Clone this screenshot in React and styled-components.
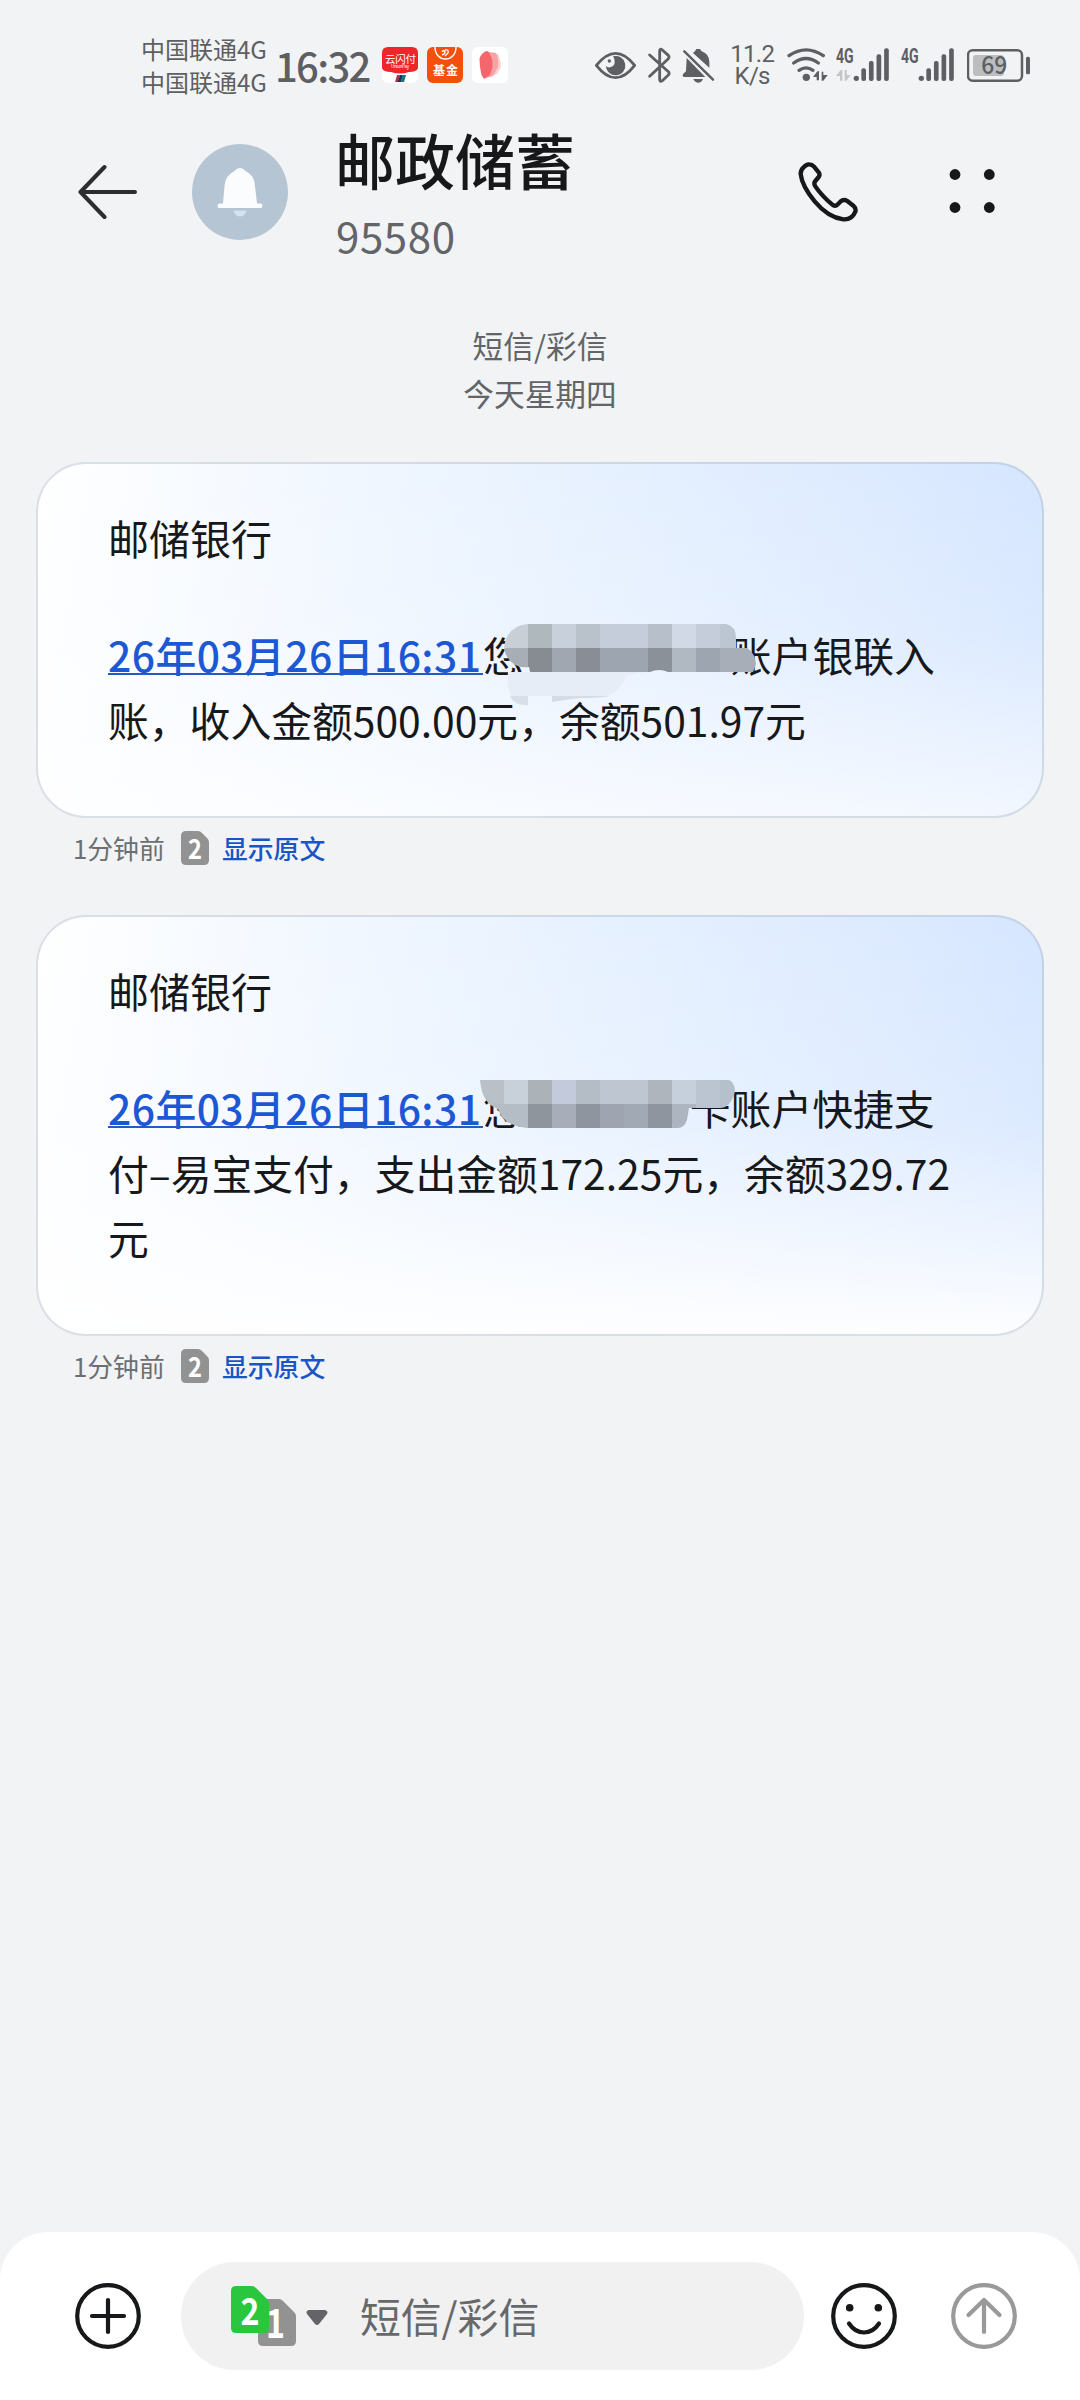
import React from "react";
import styled, { createGlobalStyle } from "styled-components";

const FONT = '"Noto Sans CJK SC", "Noto Sans", sans-serif';

const GlobalStyle = createGlobalStyle`
  * { box-sizing: border-box; }
  body { margin: 0; background: #f1f3f5; font-family: ${FONT}; }
  svg { display: block; flex: none; }
`;

const Screen = styled.div`
  width: 1080px;
  height: 2400px;
  display: flex;
  flex-direction: column;
  background: #f1f3f5;
  color: #17181a;
  overflow: hidden;
`;

const StatusBar = styled.div`
  height: 130px;
  flex: none;
  display: flex;
  align-items: center;
  justify-content: space-between;
  padding: 0 50px 0 141px;
  color: #5d5f62;
`;

const StatusGroup = styled.div`
  display: flex;
  align-items: center;
`;

const Carriers = styled.div`
  width: 126px;
  font-size: 24px;
  line-height: 33px;
  white-space: nowrap;
`;

const Clock = styled.div`
  width: 96px;
  flex: none;
  margin: 0 11px 0 8px;
  font-size: 40px;
  line-height: 50px;
  font-weight: 500;
  letter-spacing: -1.7px;
  white-space: nowrap;
`;

const AppIcons = styled.div`
  display: flex;
  gap: 9px;
`;

const Speed = styled.div`
  width: 45px;
  flex: none;
  margin: 0 12px 0 14px;
  display: flex;
  flex-direction: column;
  align-items: center;
  font-family: Roboto, sans-serif;
  font-size: 24px;
  line-height: 22px;
  letter-spacing: -0.7px;
  white-space: nowrap;
`;

const Spacer = styled.div`
  width: ${(p) => p.$w}px;
  flex: none;
`;

const Header = styled.header`
  height: 142px;
  flex: none;
  display: flex;
  align-items: center;
  padding: 0 85px 0 78px;
  margin-top: -9px;
`;

const Avatar = styled.div`
  width: 96px;
  height: 96px;
  margin: 0 47px 0 54px;
  border-radius: 50%;
  background: #b6c5d3;
`;

const Contact = styled.div`
  flex: 1;
  display: flex;
  flex-direction: column;
  gap: 12px;
`;

const Name = styled.h1`
  margin: 0;
  font-size: 60px;
  line-height: 73px;
  font-weight: 500;
`;

const Number = styled.div`
  padding-left: 1px;
  font-size: 42px;
  line-height: 56px;
  letter-spacing: 0.6px;
  color: #626467;
`;

const Actions = styled.div`
  display: flex;
  align-items: center;
  gap: 91px;
`;

const Thread = styled.main`
  flex: 1;
  padding: 58px 36px 0;
`;

const DayLabel = styled.div`
  height: 141px;
  text-align: center;
  font-size: 30.7px;
  line-height: 48px;
  color: #626467;
`;

const Card = styled.article`
  position: relative;
  padding: 41px 0 64px 70px;
  border: 2px solid rgba(170, 180, 195, 0.42);
  border-radius: 50px;
  background:
    linear-gradient(to bottom, rgba(255, 255, 255, 0) 0%, rgba(255, 255, 255, 0.2) 50%, rgba(255, 255, 255, ${(p) => p.$fade}) 100%),
    linear-gradient(100deg, #ffffff 0%, #f6faff 18%, #e8f2ff 48%, #dceaff 80%, #d2e4ff 100%);
  background-origin: border-box;
`;

const Title = styled.div`
  font-size: 41px;
  line-height: 65px;
  margin-bottom: 52px;
`;

const Line = styled.div`
  height: 65px;
  display: flex;
  font-size: 40.8px;
  line-height: 65px;
  white-space: pre;
`;

const DateLink = styled.a`
  width: 375px;
  height: 53px;
  border-bottom: 2px solid #1f5cc4;
  color: #1c58d4;
  font-weight: 500;
  letter-spacing: 0.45px;
`;

const Hidden = styled.span`
  width: ${(p) => p.$w}px;
`;

const Mosaic = styled.svg`
  position: absolute;
  left: 442px;
  top: ${(p) => p.$top}px;
`;

const Meta = styled.div`
  height: 97px;
  padding: 11px 0 0 37px;
  display: flex;
  align-items: flex-start;
  font-size: 25.8px;
  line-height: 38px;
  color: #6c6e71;
`;

const MetaTime = styled.span`
  width: 108px;
  white-space: nowrap;
`;

const MetaLink = styled.a`
  margin-left: 13px;
  color: #1a55c8;
  font-weight: 500;
`;

const Badge = styled.span`
  padding-top: 2px;
`;

const Composer = styled.footer`
  height: 168px;
  flex: none;
  display: flex;
  align-items: center;
  padding-left: 75px;
  background: #fff;
  border-radius: 48px 48px 0 0;
`;

const Field = styled.div`
  width: 623px;
  height: 108px;
  margin: 0 27px 0 40px;
  padding-left: 49px;
  display: flex;
  align-items: center;
  border-radius: 54px;
  background: #f1f1f1;
`;

const Placeholder = styled.span`
  margin-left: 32px;
  font-size: 40.8px;
  line-height: 60px;
  color: #66686a;
`;

/* Status glyphs share one drawing grid, three units to a pixel. */
const Glyph = ({ x, w, children }) => (
  <svg width={w / 3} height="40" viewBox={`${x} 75 ${w} 120`} fill="#5d5f62">
    {children}
  </svg>
);

const Signal = ({ x, data }) => (
  <Glyph x={x} w={162}>
    <text x={x} y="128" fontFamily="Roboto, sans-serif" fontWeight="700" fontSize="58" textLength="53" lengthAdjust="spacingAndGlyphs">4G</text>
    {data && (
      <g fill="#c3c5c7">
        <path d={`M${x} 168L${x + 14} 150H${x + 19}V182H${x + 12}V168Z`} />
        <path d={`M${x + 26} 150H${x + 32}V165H${x + 44}L${x + 31} 182H${x + 26}Z`} />
      </g>
    )}
    <circle cx={x + 61} cy="175" r="8" />
    {[145, 123, 103, 85].map((y, i) => (
      <rect key={y} x={x + 76 + i * 22.8} y={y} width="14" height={183 - y} rx="6" />
    ))}
  </Glyph>
);

const CloudPayIcon = () => (
  <svg width="36" height="36" viewBox="0 0 36 36">
    <rect width="36" height="36" rx="6" fill="#fff" />
    <path d="M0 6Q0 0 6 0H30Q36 0 36 6V21Q35 25 27 25Q18 28 9 25Q1 25 0 21Z" fill="#ee2529" />
    <text x="3" y="15.5" fontSize="10.5" fill="#fff" textLength="31" fontFamily={FONT}>云闪付</text>
    <text x="9" y="21" fontSize="4.5" fill="#fff" textLength="18" fontFamily={FONT}>UnionPay</text>
    <path d="M15 28H18L16 35H13Z" fill="#b8324a" />
    <path d="M18 28H21L19 35H15.5Z" fill="#17335c" />
    <path d="M20.500 28H24L22 35H19Z" fill="#16727c" />
  </svg>
);

const FundIcon = () => (
  <svg width="36" height="36" viewBox="0 0 36 36">
    <rect width="36" height="36" rx="6" fill="#f4500b" />
    <path d="M8 0C8 16 29 16 29 0" fill="none" stroke="#fff" strokeWidth="1.4" />
    <path d="M15 5Q17 2 18 5Q18 7 15 8M18 3Q22 2 21 6L18 9" fill="none" stroke="#fff" strokeWidth="1.3" />
    <text x="6" y="28" fontSize="12" fontWeight="700" fill="#fff" textLength="25" fontFamily={FONT}>基金</text>
  </svg>
);

const PetalIcon = () => (
  <svg width="36" height="36" viewBox="0 0 36 36">
    <rect width="36" height="36" rx="6" fill="#fff" />
    <path d="M20 6L26 7Q29 13 29 20L25 27L17 30Z" fill="#fbd0d2" />
    <path d="M17 5L24 6Q27 12 26 20L21 29L14 31Z" fill="#f7a3a6" />
    <path d="M7.500 12Q8 8 13 4.500L16 4Q21 10 20.500 20L18 28L12 32L9.500 28Q7.500 20 7.500 12Z" fill="#f2666c" />
  </svg>
);

const StatusIcons = () => (
  <StatusGroup>
    <Glyph x={45} w={123}>
      <path d="M49 136Q107 64 164 136Q107 210 49 136Z" fill="none" stroke="#5d5f62" strokeWidth="8.5" strokeLinejoin="round" />
      <path d="M99 109A29 29 0 1 1 78 138Q82 143 90 142Q105 139 104 124Q104 116 99 109Z" />
      <circle cx="88" cy="123" r="5" />
    </Glyph>
    <Spacer $w={12} />
    <Glyph x={203} w={69}>
      <path d="M208 105L265 156Q268 161 264 165L246 182Q238 188 238 178V94Q238 83 246 90L264 106Q268 111 264 116L208 169" fill="none" stroke="#5d5f62" strokeWidth="8.5" strokeLinecap="round" strokeLinejoin="round" />
    </Glyph>
    <Spacer $w={11} />
    <Glyph x={307} w={100}>
      <path d="M314 94L400 179" stroke="#5d5f62" strokeWidth="7.5" strokeLinecap="round" />
      <path d="M321 114L377 171H312Q307 168 310 162L319 154Z" />
      <path d="M340 99Q347 94 350 87H361L365 93Q388 101 389 125V143Z" />
      <path d="M341 177H370Q366 188 355 188Q345 187 341 177Z" />
    </Glyph>
    <Speed>
      <span>11.2</span>
      <span>K/s</span>
    </Speed>
    <Glyph x={622} w={123}>
      <g fill="none" stroke="#5d5f62" strokeWidth="10" strokeLinecap="round">
        <path d="M628 107Q679 72 731 107" />
        <path d="M642 129Q679 102 716 129" />
        <path d="M658 151Q679 136 700 151" />
      </g>
      <circle cx="680" cy="172" r="11" />
      <path d="M700 171L713 154H718V181H711V171Z" />
      <path d="M726 155H731V165H744L731 182H726Z" />
    </Glyph>
    <Spacer $w={8} />
    <Signal x={768} data />
    <Spacer $w={11} />
    <Signal x={963} />
    <Spacer $w={12} />
    <Glyph x={1161} w={190}>
      <rect x="1164" y="91" width="162" height="91" rx="14" fill="none" stroke="#5d5f62" strokeWidth="7.5" />
      <path d="M1188 105H1262Q1272 105 1272 115V158Q1272 168 1262 168H1188Q1179 168 1179 158V115Q1179 105 1188 105Z" fill="#bcbdbf" />
      <rect x="1338" y="110" width="12" height="53" rx="5" />
      <text x="1204" y="163" fontFamily={FONT} fontSize="73" fontWeight="500" textLength="78" lengthAdjust="spacingAndGlyphs">69</text>
    </Glyph>
  </StatusGroup>
);

const SimShape = ({ x = 0, y = 0, w, h, cut, fill }) => (
  <path
    d={`M${x + 5} ${y}H${x + w - cut - 2}Q${x + w - cut} ${y} ${x + w - cut + 2} ${y + 2}L${x + w - 2} ${y + cut - 2}Q${x + w} ${y + cut} ${x + w} ${y + cut + 2}V${y + h - 5}Q${x + w} ${y + h} ${x + w - 5} ${y + h}H${x + 5}Q${x} ${y + h} ${x} ${y + h - 5}V${y + 5}Q${x} ${y} ${x + 5} ${y}Z`}
    fill={fill}
  />
);

const SimBadge = () => (
  <Badge>
    <svg width="28" height="34" viewBox="0 0 28 34" overflow="visible">
      <SimShape w={28} h={34} cut={9} fill="#929292" />
      <text x="7" y="27.5" fontFamily={FONT} fontSize="27" fontWeight="700" fill="#fff" textLength="14" lengthAdjust="spacingAndGlyphs">2</text>
    </svg>
  </Badge>
);

const CELL_EDGES = [480, 504, 528, 552, 576, 600, 624, 648, 672, 696, 720, 744];

const MosaicRow = ({ y, colors, clip }) => (
  <g clipPath={`url(#${clip})`}>
    {colors.map((c, i) => (
      <rect key={i} x={CELL_EDGES[i]} y={y} width="24" height="24" fill={c} shapeRendering="crispEdges" />
    ))}
  </g>
);

const IncomeMosaic = () => (
  <Mosaic $top={160} width="288" height="84" viewBox="480 624 288 84">
    <clipPath id="income">
      <path d="M528 624H726Q736 626 736 638V648H747Q755 653 756 664L753 672H668Q659 668 650 672H530L529 667Q515 669 508 658Q501 648 507 637Q513 625 528 624Z" />
    </clipPath>
    <path d="M508 672H646L627 675Q622 690 608 696H511Q506 686 508 672Z" fill="#e6edf7" />
    <path d="M510 696H528V705Q514 706 510 696Z" fill="#d9dfe8" />
    <path d="M552 696H609Q602 698 580 698L552 702Z" fill="#d6dbe4" />
    <MosaicRow y={624} clip="income" colors={["#c9cfd6", "#c9cfd7", "#afb8bd", "#c8d0dc", "#b9c1cb", "#c5ccda", "#c5ccda", "#b7c0ca", "#d0d9e5", "#c4cdd9", "#bcc5d2", "#bcc5d2"]} />
    <MosaicRow y={648} clip="income" colors={["#a8aeb5", "#a8aeb5", "#878c92", "#a1a7b0", "#898e96", "#9da5b0", "#9da5b0", "#8a9199", "#b0b8c2", "#9da5b0", "#a7aeb8", "#a7aeb8"]} />
  </Mosaic>
);

const PaymentMosaic = () => (
  <Mosaic $top={163} width="288" height="60" viewBox="480 1080 288 60">
    <clipPath id="payment">
      <path d="M480 1080H729Q735 1083 735 1091Q731 1108 720 1108H689L687 1120Q684 1128 678 1128H528Q503 1126 498 1109Q482 1104 480 1080Z" />
    </clipPath>
    <MosaicRow y={1080} clip="payment" colors={["#b9c0c8", "#c8d0da", "#abb3b8", "#c2cadb", "#b4bcc6", "#bec6d2", "#bec6d2", "#aeb5bd", "#c5d0dc", "#bac5d1", "#b4c0cc"]} />
    <MosaicRow y={1104} clip="payment" colors={["#b4bcc6", "#b4bcc6", "#8e959c", "#a7aeba", "#8f959f", "#9ea5b1", "#a1a9b4", "#8f959f", "#adb5c0", "#bac5d1", "#b4c0cc"]} />
  </Mosaic>
);

const MessageMeta = () => (
  <Meta>
    <MetaTime>1分钟前</MetaTime>
    <SimBadge />
    <MetaLink>显示原文</MetaLink>
  </Meta>
);

const RoundIcon = ({ color = "#17181a", children }) => (
  <svg width="66" height="66" viewBox="0 0 66 66" fill="none" stroke={color} strokeWidth="4.2" strokeLinecap="round" strokeLinejoin="round">
    <circle cx="33" cy="33" r="30.8" />
    {children}
  </svg>
);

export default function App() {
  return (
    <Screen>
      <GlobalStyle />
      <StatusBar>
        <StatusGroup>
          <Carriers>
            <div>中国联通4G</div>
            <div>中国联通4G</div>
          </Carriers>
          <Clock>16:32</Clock>
          <AppIcons>
            <CloudPayIcon />
            <FundIcon />
            <PetalIcon />
          </AppIcons>
        </StatusGroup>
        <StatusIcons />
      </StatusBar>

      <Header>
        <svg width="60" height="56" viewBox="0 0 60 56" fill="none" stroke="#2b2d2f" strokeWidth="4" strokeLinecap="round" strokeLinejoin="round">
          <path d="M26.500 3L2.500 28L26.500 53M2.500 28H57" />
        </svg>
        <Avatar>
          <svg width="96" height="96" viewBox="0 0 96 96">
            <path d="M42.500 27Q45 24 48 24Q51 24 53.500 27Q62.500 31 63 42L65 59.500H68.500Q70.500 59.500 70.500 62Q70.500 64 68.500 64H27Q25.500 64 25.500 62Q25.500 59.500 27.500 59.500H31L32.500 42Q33.500 31 42.500 27Z" fill="#fafcfd" />
            <path d="M41.500 66.500H54.500Q53 72 48 72.500Q43 72 41.500 66.500Z" fill="#d6e2ee" />
          </svg>
        </Avatar>
        <Contact>
          <Name>邮政储蓄</Name>
          <Number>95580</Number>
        </Contact>
        <Actions>
          <svg width="60" height="60" viewBox="174 126 180 180" fill="none" stroke="#17181a" strokeWidth="13" strokeLinejoin="round">
            <path d="M208 133Q216 133 222 140L236 157Q241 164 236 171L226 183Q220 190 226 199Q246 228 277 254Q284 260 292 254L301 245Q311 236 322 243L340 257Q349 265 346 275Q336 300 310 298Q264 292 224 244Q186 198 182 162Q182 150 190 143Q199 132 208 133Z" />
          </svg>
          <svg width="46" height="46" viewBox="0 0 46 46" fill="#17181a">
            <circle cx="6" cy="5.500" r="5.400" />
            <circle cx="40.300" cy="5.500" r="5.400" />
            <circle cx="6" cy="38.500" r="5.400" />
            <circle cx="40.300" cy="38.500" r="5.400" />
          </svg>
        </Actions>
      </Header>

      <Thread>
        <DayLabel>
          <div>短信/彩信</div>
          <div>今天星期四</div>
        </DayLabel>

        <Card $fade={0.72}>
          <Title>邮储银行</Title>
          <Line>
            <DateLink>26年03月26日16:31</DateLink>
            <span>您</span>
            <Hidden $w={207} />
            <span>账户银联入</span>
          </Line>
          <Line>账，收入金额500.00元，余额501.97元</Line>
          <IncomeMosaic />
        </Card>
        <MessageMeta />

        <Card $fade={0.95}>
          <Title>邮储银行</Title>
          <Line>
            <DateLink>26年03月26日16:31</DateLink>
            <span>您</span>
            <Hidden $w={166} />
            <span>卡账户快捷支</span>
          </Line>
          <Line>付–易宝支付，支出金额172.25元，余额329.72</Line>
          <Line>元</Line>
          <PaymentMosaic />
        </Card>
        <MessageMeta />
      </Thread>

      <Composer>
        <RoundIcon>
          <path d="M33 17V49M17 33H49" />
        </RoundIcon>
        <Field>
          <svg width="98" height="62" viewBox="231 2285 98 62" overflow="visible">
            <SimShape x={259} y={2299} w={38} h={47} cut={15} fill="#929292" />
            <text x="267" y="2337.500" fontFamily={FONT} fontSize="40" fontWeight="700" fill="#fff" textLength="19" lengthAdjust="spacingAndGlyphs">1</text>
            <SimShape x={232} y={2286} w={38} h={47} cut={15} fill="#28c73e" />
            <text x="241.500" y="2325" fontFamily={FONT} fontSize="38" fontWeight="700" fill="#fff" textLength="19" lengthAdjust="spacingAndGlyphs">2</text>
            <path d="M309.500 2310H326Q329.500 2311 328 2314L320 2324Q318 2326 316 2324L308 2314Q306.500 2311 309.500 2310Z" fill="#626467" />
          </svg>
          <Placeholder>短信/彩信</Placeholder>
        </Field>
        <RoundIcon>
          <g fill="#17181a" stroke="none">
            <circle cx="18.700" cy="24.700" r="3.800" />
            <circle cx="47.300" cy="24.700" r="3.800" />
          </g>
          <path d="M18 40.500Q24 49.500 33 49.500Q42 49.500 48 40.500" />
        </RoundIcon>
        <Spacer $w={54} />
        <RoundIcon color="#999">
          <path d="M33 49V17M17.500 32L33 17L48.500 32" />
        </RoundIcon>
      </Composer>
    </Screen>
  );
}
